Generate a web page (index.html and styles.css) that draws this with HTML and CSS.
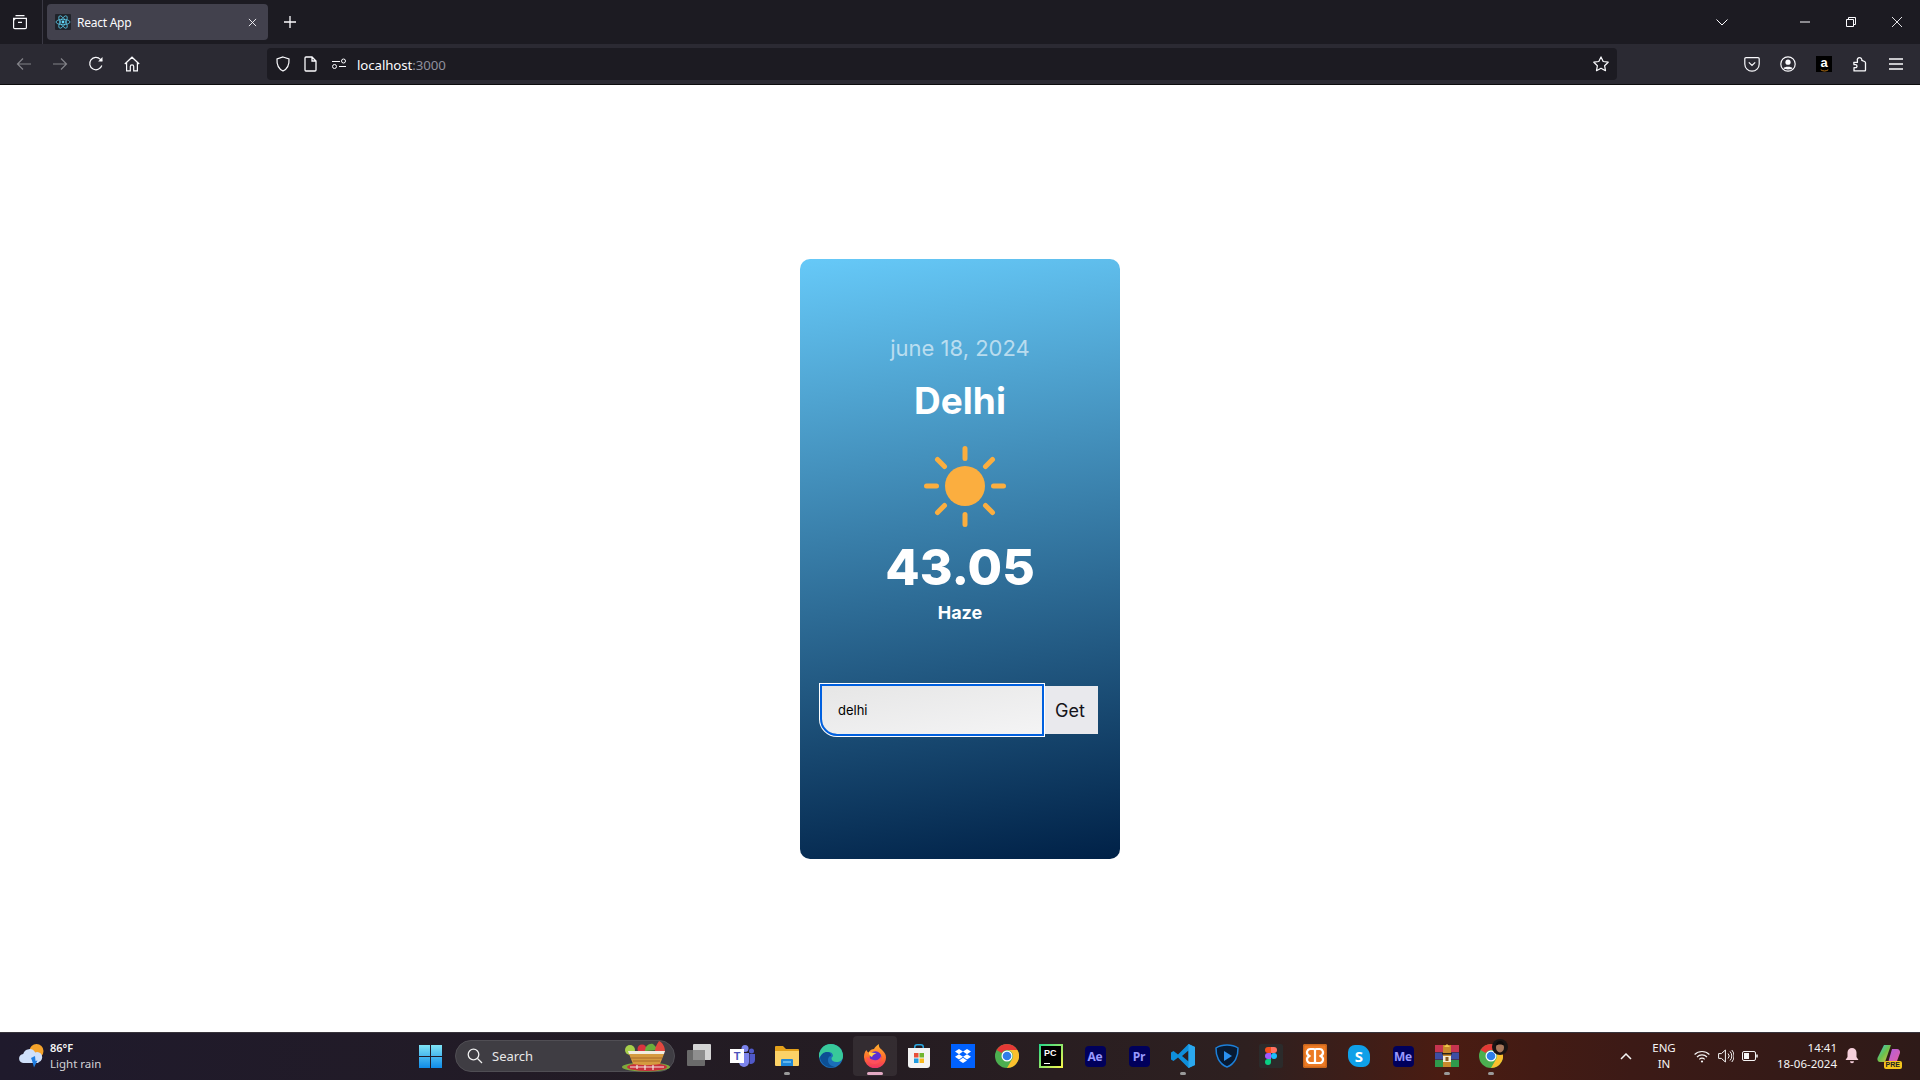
FILE: index.html
```html
<!DOCTYPE html>
<html lang="en">
<head>
<meta charset="utf-8">
<title>React App</title>
<link rel="stylesheet" href="styles.css">
</head>
<body>
<header class="chrome">
  <div class="titlebar">
    <div class="tabs-btn">
      <svg class="ico16" viewBox="0 0 16 16" fill="none" stroke="#fbfbfe" stroke-width="1.2"><path d="M3.5 1.6h9M1.6 4.4h12.8v9a1.2 1.2 0 0 1-1.2 1.2H2.8a1.2 1.2 0 0 1-1.2-1.2zM1.6 7.4a3 3 0 0 1 2-3M6 8.4h4"/></svg>
    </div>
    <div class="tab">
      <span class="favicon">
        <svg viewBox="-8 -8 16 16" width="16" height="16" fill="none" stroke="#61dafb" stroke-width=".7"><ellipse rx="7" ry="2.7"/><ellipse rx="7" ry="2.7" transform="rotate(60)"/><ellipse rx="7" ry="2.7" transform="rotate(120)"/><circle r="1.4" fill="#61dafb" stroke="none"/></svg>
      </span>
      <span class="tab-title">React App</span>
      <svg class="tab-close" viewBox="0 0 10 10" fill="none" stroke="#fbfbfe" stroke-width="1"><path d="M1 1l8 8M9 1l-8 8"/></svg>
    </div>
    <svg class="newtab" viewBox="0 0 12 12" fill="none" stroke="#fbfbfe" stroke-width="1.3"><path d="M6 0v12M0 6h12"/></svg>
    <div class="win-controls">
      <svg class="win-list" viewBox="0 0 12 7" fill="none" stroke="#fbfbfe" stroke-width="1"><path d="M.5.5L6 6l5.5-5.5"/></svg>
      <svg class="win-btn win-min" viewBox="0 0 10 10" stroke="#fbfbfe" stroke-width="1"><path d="M0 5h10"/></svg>
      <svg class="win-btn win-max" viewBox="0 0 10 10" fill="none" stroke="#fbfbfe" stroke-width="1"><path d="M.5 2.5h7v7h-7zM2.5 2.5V.5h7v7h-2"/></svg>
      <svg class="win-btn win-close" viewBox="0 0 10 10" fill="none" stroke="#fbfbfe" stroke-width=".9"><path d="M0 0l10 10M10 0L0 10"/></svg>
    </div>
  </div>
  <div class="toolbar">
    <div class="nav">
      <svg class="ico16 dim" viewBox="0 0 16 16" fill="none" stroke="#fbfbfe" stroke-width="1.2"><path d="M15 8H1.5M7 2.5L1.5 8 7 13.5"/></svg>
      <svg class="ico16 dim" viewBox="0 0 16 16" fill="none" stroke="#fbfbfe" stroke-width="1.2"><path d="M1 8h13.5M9 2.5L14.5 8 9 13.5"/></svg>
      <svg class="ico16" viewBox="0 0 16 16" fill="none" stroke="#fbfbfe" stroke-width="1.2"><path d="M13.8 9.5A6.2 6.2 0 1 1 12.4 3.3L14 4.9"/><path d="M14.5 1v4.4h-4.4" fill="#fbfbfe" stroke="none"/></svg>
      <svg class="ico16" viewBox="0 0 16 16" fill="none" stroke="#fbfbfe" stroke-width="1.2"><path d="M.8 8L8 1.2 15.2 8M2.6 6.6v8.2h3.7v-4.2a1.7 1.7 0 0 1 3.4 0v4.2h3.7V6.6"/></svg>
    </div>
    <div class="urlbar">
      <svg class="ico16 u-shield" viewBox="0 0 16 16" fill="none" stroke="#fbfbfe" stroke-width="1.2"><path d="M8 1l6 2c.4 6-1.8 10-6 12C3.800 13 1.600 9 2 3z"/></svg>
      <svg class="ico16 u-page" viewBox="0 0 16 16" fill="none" stroke="#fbfbfe" stroke-width="1.3"><path d="M3 1h6l4 4v9a1 1 0 0 1-1 1H3a1 1 0 0 1-1-1V2a1 1 0 0 1 1-1zM9 1v4h4"/></svg>
      <svg class="ico16 u-perm" viewBox="0 0 16 16" fill="none" stroke="#fbfbfe" stroke-width="1"><path d="M1 5.500h8M8 10.500h7"/><circle cx="12.500" cy="5" r="2"/><circle cx="3.500" cy="10.500" r="2"/></svg>
      <span class="url"><span class="url-host">localhost</span><span class="url-port">:3000</span></span>
      <svg class="ico16 u-star" viewBox="0 0 16 16" fill="none" stroke="#fbfbfe" stroke-width="1.200"><path d="M8 .9l2.200 4.600 5 .7-3.600 3.500.9 5L8 12.300 3.500 14.700l.9-5L.8 6.200l5-.7z" stroke-linejoin="round"/></svg>
    </div>
    <div class="tools">
      <svg class="ico16" viewBox="0 0 16 16" fill="none" stroke="#fbfbfe" stroke-width="1.200"><path d="M2 1.600h12a1.200 1.200 0 0 1 1.200 1.200V8a7.200 7.200 0 0 1-14.400 0V2.800A1.200 1.200 0 0 1 2 1.600zM4.800 6.400L8 9.400l3.200-3"/></svg>
      <svg class="ico16" viewBox="0 0 16 16" fill="none" stroke="#fbfbfe" stroke-width="1.200"><circle cx="8" cy="8" r="7.200"/><circle cx="8" cy="6.200" r="2.600" fill="#fbfbfe" stroke="none"/><path d="M3.400 12.200c1-2 8.200-2 9.200 0-1.500 1.600-7.700 1.600-9.200 0z" fill="#fbfbfe" stroke="none"/></svg>
      <span class="amazon"><span class="amazon-a">a</span><svg class="amazon-smile" viewBox="0 0 12 4" fill="none" stroke="#f39a1f" stroke-width="1"><path d="M1 1c3 2.200 7 2.200 10 0"/></svg></span>
      <svg class="ico16" viewBox="0 0 16 16" fill="none" stroke="#fbfbfe" stroke-width="1.300"><path d="M1.800 6.400h3.600V4.600a2.200 2.200 0 0 1 2.300-2.900 2.200 2.200 0 0 1 2.100 2.700l2.700 1.100c.7.300 1 .7 1 1.400v7.200a.8.800 0 0 1-.8.800H2v-3.200h1.500a1.500 1.500 0 0 0 0-3H2z" stroke-linejoin="round"/></svg>
      <svg class="ico16" viewBox="0 0 16 16" stroke="#fbfbfe" stroke-width="1.300"><path d="M1 3h14M1 8h14M1 13h14"/></svg>
    </div>
  </div>
</header>

<main class="page">
  <section class="card">
    <p class="date">june 18, 2024</p>
    <h1 class="city">Delhi</h1>
    <svg class="sun" viewBox="-42 -42 84 84" fill="none" stroke="#fbae3f" stroke-width="5" stroke-linecap="round">
      <circle r="20" fill="#fbae3f" stroke="none"/>
      <path d="M0-37.500v10M0 28.500v10M-38.500 0h10M28.500 0h10M-27.500-26.500l7 7M27.500-26.500l-7 7M-27.500 26.500l7-7M27.500 26.500l-7-7"/>
    </svg>
    <p class="temp">43.05</p>
    <p class="cond">Haze</p>
    <form class="search-form">
      <input class="city-input" type="text" value="delhi">
      <button class="get-btn" type="button">Get</button>
    </form>
  </section>
</main>

<footer class="taskbar">
  <div class="weather">
    <svg class="weather-ico" viewBox="0 0 26 26"><circle cx="18.500" cy="8" r="7" fill="#f5a32b"/><path d="M6 20a4.500 4.500 0 0 1-.8-9 6.500 6.500 0 0 1 12-1.500A5 5 0 0 1 21 19l-1 1z" fill="#cfe0fa"/><path d="M13 15l4-2 .5 5 2-.5-3.500 7-2-7z" fill="#1f7de0"/></svg>
    <div class="weather-text"><span class="w-temp">86°F</span><span class="w-cond">Light rain</span></div>
  </div>
  <svg class="start" viewBox="0 0 23 23"><defs><linearGradient id="sg" x1="0" y1="0" x2="0" y2="1"><stop offset="0" stop-color="#7fe3f5"/><stop offset="1" stop-color="#0f8be8"/></linearGradient></defs><path d="M0 0h11v11H0zM12 0h11v11H12zM0 12h11v11H0zM12 12h11v11H12z" fill="url(#sg)"/></svg>
  <div class="searchbox">
    <svg class="search-ico" viewBox="0 0 16 16" fill="none" stroke="#f0f0f0" stroke-width="1.300"><circle cx="6.500" cy="6.500" r="5.300"/><path d="M10.500 10.500l4.500 4.500"/></svg>
    <span class="search-text">Search</span>
    <svg class="food" viewBox="0 0 50 32"><ellipse cx="25" cy="27" rx="24" ry="4.500" fill="#7fa93c"/><ellipse cx="26" cy="27" rx="20" ry="4" fill="#c92f3c"/><path d="M9 27h34M16 25v4M24 25v5M32 25v5" stroke="#f4e6e0" stroke-width="1.200" fill="none"/><circle cx="9" cy="10" r="5" fill="#a6cf4a"/><circle cx="21" cy="9" r="4.500" fill="#d8343f"/><path d="M24 11c0-5 4-8 8-7l6 6z" fill="#6aae3c"/><path d="M34 12c0-6 3-9 4-11 4 2 6 6 6 11z" fill="#e2483f"/><path d="M7 11h37l-1 3H8z" fill="#f1ece0"/><path d="M8 14h35l-4 10c-8 1.500-19 1.500-27 0z" fill="#d59a3f"/><path d="M10 18h31M12 21h27" stroke="#a8692a" stroke-width="1" fill="none"/></svg>
  </div>
  <div class="apps">
    <div class="app"><svg class="app-ico" viewBox="0 0 24 24"><rect x="0" y="6" width="18" height="16" rx="1" fill="#6a6a6a"/><rect x="6" y="0" width="18" height="16" rx="1" fill="#e4e4e4" opacity=".92"/><rect x="6" y="6" width="12" height="10" fill="#8e8e8e"/></svg></div>
    <div class="app"><svg class="app-ico" viewBox="0 0 24 24"><circle cx="14" cy="4.500" r="3.500" fill="#7b83eb"/><circle cx="20.500" cy="7" r="2.500" fill="#5059c9"/><path d="M8 9h10v9a5 5 0 0 1-10 0z" fill="#7b83eb"/><path d="M18.500 10H24v6a4 4 0 0 1-5.500 3.700z" fill="#5059c9"/></svg><span class="teams-t">T</span></div>
    <div class="app has-dot"><svg class="app-ico" viewBox="0 0 24 24"><path d="M0 3a1 1 0 0 1 1-1h7l3 3h12a1 1 0 0 1 1 1v3H0z" fill="#e4a11b"/><path d="M0 7h24v14a1 1 0 0 1-1 1H1a1 1 0 0 1-1-1z" fill="#fcd267"/><path d="M7 15h10a1 1 0 0 1 1 1v6H6v-6a1 1 0 0 1 1-1z" fill="#1e88d9"/><rect x="8" y="17" width="8" height="2" fill="#61b7ef"/></svg></div>
    <div class="app"><svg class="app-ico" viewBox="0 0 24 24"><circle cx="12" cy="12" r="12" fill="#1b6fb8"/><path d="M12 0a12 12 0 0 1 12 12c0 4-3 6-6.500 6-3 0-5-1.500-5-3.500 0-1 .7-1.500 1.200-2 .6-.6.300-4.500-4.200-4.500-4 0-7.500 3-9.500 6A12 12 0 0 1 12 0z" fill="#38c99a"/><path d="M1 14c1-4 4-6 7-6 3 0 4 2 4 4-2 0-3 2-3 4 0 4 3 6 7 7a12 12 0 0 1-15-9z" fill="#0c4f94"/></svg></div>
    <div class="app active"><svg class="app-ico" viewBox="0 0 24 24"><defs><linearGradient id="ff" x1="0" y1="0" x2="0" y2="1"><stop offset="0" stop-color="#ffb02e"/><stop offset=".6" stop-color="#ff6a2e"/><stop offset="1" stop-color="#f0306a"/></linearGradient></defs><path d="M1 13c0-3 .8-5.500 2.500-7 .3 1.200 1 2 2 2.500C7 6 9 5 11 5c1-2.500 3-3.500 5-5-.4 2.500.3 3.500 2 5 3 2.500 5 5 5 8.500A11 11 0 0 1 1 13z" fill="url(#ff)"/><circle cx="12.500" cy="13" r="5.800" fill="#5b2ed0"/><path d="M3 13c2 5 6 8 11 6.500 3-1 5-4 4-7.500-1 3-4 5-7 4-3-.7-5-2-8-3z" fill="#ff4f5e"/><path d="M6 8c2.500 1 5 .5 7.500 1.500C11 10 9.500 11 9 13c-2-1-3.500-2.500-3-5z" fill="#ffd24a"/></svg></div>
    <div class="app"><svg class="app-ico" viewBox="0 0 24 24"><path d="M7 5V3a3 3 0 0 1 3-3h4a3 3 0 0 1 3 3v2h-1.500V3A1.500 1.500 0 0 0 14 1.500h-4A1.500 1.500 0 0 0 8.500 3v2z" fill="#2aa7e0"/><path d="M1 4h22v17a3 3 0 0 1-3 3H4a3 3 0 0 1-3-3z" fill="#f3f3f3"/><rect x="7" y="9" width="4.500" height="4.500" fill="#e8503a"/><rect x="12.500" y="9" width="4.500" height="4.500" fill="#70b52e"/><rect x="7" y="14.500" width="4.500" height="4.500" fill="#1f9be0"/><rect x="12.500" y="14.500" width="4.500" height="4.500" fill="#f7b81e"/></svg></div>
    <div class="app"><svg class="app-ico" viewBox="0 0 24 24"><rect width="24" height="24" fill="#0061fe"/><path d="M8 5l4 2.600L8 10.200 4 7.600zM16 5l4 2.600-4 2.600-4-2.600zM4 12.800l4-2.600 4 2.600-4 2.600zM12 12.800l4-2.600 4 2.600-4 2.600zM8 16.400l4-2.600 4 2.600-4 2.600z" fill="#fff"/></svg></div>
    <div class="app"><svg class="app-ico" viewBox="-12 -12 24 24"><circle r="12" fill="#4caf50"/><path d="M0-12A12 12 0 0 1 10.400-6H0A6 6 0 0 0-5.200-3L-10.400-6A12 12 0 0 1 0-12z" fill="#e53935"/><path d="M10.400-6A12 12 0 0 1 0 12L5.200 3A6 6 0 0 0 0-6z" fill="#fbc02d"/><circle r="5.500" fill="#fff"/><circle r="4.300" fill="#2f7ee8"/></svg></div>
    <div class="app"><span class="pc-ico"><span class="pc-inner">PC<i class="pc-bar"></i></span></span></div>
    <div class="app"><span class="adobe adobe-ae">Ae</span></div>
    <div class="app"><span class="adobe adobe-pr">Pr</span></div>
    <div class="app has-dot"><svg class="app-ico" viewBox="0 0 24 24"><path d="M17.500 0L24 3v18l-6.500 3L7 13.500 2.500 17 0 15.500V8.500L2.500 7 7 10.500zM17.500 6.500L11 12l6.500 5.500z" fill="#0f8fdb"/><path d="M17.500 0L24 3v18l-6.500 3z" fill="#2ba8ee"/></svg></div>
    <div class="app"><svg class="app-ico" viewBox="0 0 24 24"><path d="M12 1c4 0 8 1 11 3 .3 8-3 16-11 19C4 20 .7 12 1 4c3-2 7-3 11-3z" fill="#071a33" stroke="#1c7fd8" stroke-width="1.500"/><path d="M9 7l8 5-8 5z" fill="#2a90f0"/></svg></div>
    <div class="app"><span class="figma-bg"><svg viewBox="0 0 12 18" width="12" height="18"><path d="M6 0H3a3 3 0 0 0 0 6h3z" fill="#f24e1e"/><path d="M6 0h3a3 3 0 0 1 0 6H6z" fill="#ff7262"/><path d="M6 6H3a3 3 0 0 0 0 6h3z" fill="#a259ff"/><circle cx="9" cy="9" r="3" fill="#1abcfe"/><path d="M3 12h3v3a3 3 0 1 1-3-3z" fill="#0acf83"/></svg></span></div>
    <div class="app"><svg class="app-ico" viewBox="0 0 24 24"><rect width="24" height="24" rx="2" fill="#ec7a24"/><rect x=".7" y=".7" width="22.600" height="22.600" rx="1.500" fill="none" stroke="#c9661c" stroke-width="1.400"/><path d="M7.500 5h3c1 0 1.500.8 1.500 1.800C12 5.800 12.500 5 13.500 5h3a3.500 3.500 0 0 1 1.800 6.500l-1 .5 1 .5A3.500 3.500 0 0 1 16.500 19h-3c-1 0-1.500-.8-1.500-1.800 0 1-.5 1.800-1.500 1.800h-3a3.500 3.500 0 0 1-1.800-6.500l1-.5-1-.5A3.500 3.500 0 0 1 7.500 5zM12 7v10" fill="none" stroke="#fff" stroke-width="2.200" stroke-linejoin="round"/></svg></div>
    <div class="app"><span class="skype">S</span></div>
    <div class="app"><span class="adobe adobe-me">Me</span></div>
    <div class="app has-dot"><svg class="app-ico" viewBox="0 0 24 24"><rect y="1" width="24" height="7" fill="#c7344f"/><rect y="8.500" width="24" height="7" fill="#3e4ea3"/><rect y="16" width="24" height="7" fill="#2f9a4c"/><rect x="8" y="1" width="8" height="22" fill="#c98a2c"/><path d="M12 0l3 3H9z" fill="#efc44a"/><rect x="7" y="9" width="10" height="1.500" fill="#2a2218"/><rect x="8" y="12" width="8" height="6" fill="#f3ead0"/><rect x="10.500" y="13" width="3" height="4" fill="#8a5a20"/></svg></div>
    <div class="app has-dot"><svg class="app-ico" viewBox="-12 -12 24 24"><circle r="12" fill="#4caf50"/><path d="M0-12A12 12 0 0 1 10.400-6H0A6 6 0 0 0-5.200-3L-10.400-6A12 12 0 0 1 0-12z" fill="#e53935"/><path d="M10.400-6A12 12 0 0 1 0 12L5.200 3A6 6 0 0 0 0-6z" fill="#fbc02d"/><circle r="5.500" fill="#fff"/><circle r="4.300" fill="#2f7ee8"/></svg><svg class="chrome-avatar" viewBox="0 0 16 16"><circle cx="8" cy="8" r="8" fill="#1a1414"/><ellipse cx="8" cy="8.500" rx="4" ry="5" fill="#a8785c"/><path d="M3.500 7c0-3 2-5 4.500-5s4.500 2 4.500 5c-2-2-7-2-9 0z" fill="#0e0a0a"/></svg></div>
  </div>
  <div class="tray">
    <svg class="tray-chev" viewBox="0 0 12 7" fill="none" stroke="#f5f5f5" stroke-width="1.500"><path d="M1 6l5-5 5 5"/></svg>
    <div class="lang"><span>ENG</span><span>IN</span></div>
    <svg class="tray-wifi" viewBox="0 0 16 13" fill="none" stroke="#f5f5f5" stroke-width="1.100"><path d="M.6 4.500a10.500 10.500 0 0 1 14.800 0M3 7a7 7 0 0 1 10 0M5.300 9.300a3.700 3.700 0 0 1 5.400 0"/><circle cx="8" cy="11.500" r="1.100" fill="#f5f5f5" stroke="none"/></svg>
    <svg class="tray-vol" viewBox="0 0 16 14" fill="none" stroke="#f5f5f5" stroke-width="1"><path d="M.6 4.600h2.800L7.400 1v12L3.400 9.400H.6zM10 4.500a3.500 3.500 0 0 1 0 5M12 2.500a6.500 6.500 0 0 1 0 9M13.800 1a9 9 0 0 1 0 12"/></svg>
    <svg class="tray-bat" viewBox="0 0 16 10" fill="none" stroke="#f5f5f5" stroke-width="1"><rect x=".5" y=".5" width="13" height="9" rx="1.500"/><rect x="2" y="2" width="5" height="6" fill="#f5f5f5" stroke="none"/><path d="M15 3.500v3" stroke-width="1.500"/></svg>
    <div class="clock"><span>14:41</span><span>18-06-2024</span></div>
    <svg class="tray-bell" viewBox="0 0 14 16" fill="#f6d0dc"><path d="M7 0a4.500 4.500 0 0 1 4.500 4.500V9l2 3H.5l2-3V4.500A4.500 4.500 0 0 1 7 0z"/><path d="M5 13.200h4a2 2 0 0 1-4 0z"/></svg>
    <div class="copilot">
      <svg class="copilot-ico" viewBox="0 0 24 20"><defs><linearGradient id="cg" x1="0" y1="0" x2="1" y2="1"><stop offset="0" stop-color="#35c7e8"/><stop offset=".5" stop-color="#6cc04a"/><stop offset="1" stop-color="#f2c04b"/></linearGradient><linearGradient id="cp" x1="0" y1="0" x2="1" y2="1"><stop offset="0" stop-color="#b05fe0"/><stop offset="1" stop-color="#e65fa0"/></linearGradient></defs><path d="M7 1h7l-6 17H3c-2 0-3-2-2.500-4z" fill="url(#cg)"/><path d="M15 5h5c2 0 3.500 2 3 4l-3 8c-.5 1.500-2 2-3 2h-6z" fill="url(#cp)"/></svg>
      <span class="pre">PRE</span>
    </div>
  </div>
</footer>
</body>
</html>
```
FILE: styles.css
```css
* { box-sizing: border-box; }
html, body { margin: 0; height: 100%; }
body { display: flex; flex-direction: column; height: 1080px; overflow: hidden; background: #fff; font-family: "Noto Sans", "Open Sans", sans-serif; }
svg { display: block; flex: none; }
.ico16 { width: 16px; height: 16px; }
.dim { opacity: .42; }

.chrome { flex: none; height: 85px; display: flex; flex-direction: column; border-bottom: 1px solid #0c0c0d; }
.titlebar { height: 44px; background: #1c1b22; display: flex; align-items: center; }
.tabs-btn { width: 43px; height: 44px; flex: none; display: flex; align-items: center; justify-content: center; border-right: 1px solid #3a3944; padding-right: 2px; }
.tab { width: 221px; height: 36px; margin-left: 4px; background: #42414d; border-radius: 4px; display: flex; align-items: center; padding: 0 8px; color: #fbfbfe; }
.favicon { width: 16px; height: 16px; background: #20232a; border-radius: 1px; flex: none; }
.tab-title { margin-left: 6px; font-size: 12px; flex: 1; font-family: "Noto Sans", sans-serif; letter-spacing: -.25px; }
.tab-close { width: 9px; height: 9px; margin-right: 3px; }
.newtab { width: 12px; height: 12px; margin-left: 16px; }
.win-controls { margin-left: auto; display: flex; align-items: center; }
.win-list { width: 12px; height: 7px; margin-right: 72px; }
.win-btn { width: 10px; height: 10px; margin-right: 36px; }
.win-close { margin-right: 18px; }

.toolbar { height: 40px; background: #2b2a33; display: flex; align-items: center; }
.nav { display: flex; align-items: center; width: 267px; padding-left: 16px; gap: 20px; }
.urlbar { width: 1350px; height: 32px; background: #1c1b22; border-radius: 4px; display: flex; align-items: center; padding-left: 8px; flex: none; }
.u-page { margin-left: 12px; }
.u-perm { margin-left: 12px; }
.url { margin-left: 10px; padding-top: 1px; font-size: 13.300px; flex: 1; letter-spacing: -.1px; }
.url-host { color: #fbfbfe; }
.url-port { color: #8f8f9d; }
.u-star { margin-right: 8px; }
.tools { display: flex; align-items: center; gap: 20px; padding-left: 127px; }
.tools > * { width: 16px; height: 16px; flex: none; }
.amazon { background: #000; display: flex; flex-direction: column; align-items: center; position: relative; }
.amazon-a { color: #fff; font: 700 13px/13px "Liberation Sans", sans-serif; }
.amazon-smile { width: 11px; height: 3px; }

.page { flex: 1; display: flex; align-items: center; justify-content: center; background: #fff; }
.card { width: 320px; height: 600px; border-radius: 10px; background: linear-gradient(172deg, #66c9f8 0%, #002147 100%); display: flex; flex-direction: column; align-items: center; padding-top: 74px; font-family: Inter, sans-serif; color: #fff; }
.date { margin: 0; font-size: 22px; line-height: 30px; color: rgba(255, 255, 255, .6); }
.city { margin: 16px 0 0; font-size: 37px; line-height: 44px; font-weight: 700; }
.sun { width: 84px; height: 84px; margin: 21px 0 0 10px; }
.temp { margin: 8px 0 0; font-size: 50px; line-height: 63px; font-weight: 800; }
.cond { margin: 3px 0 0; font-size: 18px; line-height: 22px; font-weight: 700; }
.search-form { margin-top: 62px; display: flex; width: 276px; height: 48px; }
.city-input { width: 220px; height: 48px; border: 0; padding: 1px 16px 0; font: 400 13px Inter, sans-serif; color: #000; background: linear-gradient(170deg, #e6e6e6, #f4f4f5); border-radius: 0 0 0 15px; outline: 2px solid #0060df; box-shadow: 0 0 0 3px #fff; position: relative; z-index: 1; }
.get-btn { width: 56px; height: 48px; border: 0; padding: 1px 0 0; font: 400 18px Inter, sans-serif; color: #15141a; background: #e9e9ed; }

.taskbar { flex: none; height: 48px; background: linear-gradient(90deg, #1f1a2c 0%, #241c22 45%, #2e2020 65%, #4a1c12 75%, #3c1a16 85%, #2e1a18 100%); box-shadow: inset 0 1px 0 #38343c; display: flex; align-items: center; color: #f5f5f5; position: relative; }
.weather { width: 419px; padding-left: 18px; display: flex; align-items: center; flex: none; }
.weather-ico { width: 26px; height: 26px; }
.weather-text { display: flex; flex-direction: column; margin-left: 6px; font-size: 11.500px; line-height: 16px; }
.w-temp { font-weight: 600; font-size: 11px; }
.w-cond { color: #d4d2d6; }
.start { width: 23px; height: 23px; }
.searchbox { width: 220px; height: 32px; margin-left: 13px; border-radius: 16px; background: #3f3d43; border: 1px solid #504e54; display: flex; align-items: center; padding-left: 11px; flex: none; }
.search-ico { width: 16px; height: 16px; }
.search-text { margin-left: 9px; font-size: 13px; color: #e8e8e8; flex: 1; }
.food { width: 50px; height: 32px; margin-right: 3px; }
.apps { display: flex; align-items: center; margin-left: 2px; height: 48px; }
.app { width: 44px; height: 40px; display: flex; align-items: center; justify-content: center; position: relative; flex: none; }
.app-ico { width: 24px; height: 24px; }
.has-dot::after { content: ""; position: absolute; left: 19px; bottom: 1px; width: 6px; height: 3px; border-radius: 2px; background: #9a9a9a; }
.active { background: rgba(255, 255, 255, .07); border-radius: 4px; }
.active::after { content: ""; position: absolute; left: 14px; bottom: 1px; width: 16px; height: 3px; border-radius: 2px; background: #e3aac4; }
.teams-t { position: absolute; left: 9px; top: 13px; width: 14px; height: 14px; background: #fff; color: #4b53bc; font: 700 11px/14px "Liberation Sans", sans-serif; text-align: center; }
.pc-ico { width: 24px; height: 24px; background: linear-gradient(135deg, #21d789, #fcf84a); padding: 2px; display: block; }
.pc-inner { display: block; width: 20px; height: 20px; background: #000; color: #fff; font: 700 9px/12px "Liberation Sans", sans-serif; padding: 1px 0 0 3px; position: relative; }
.pc-bar { position: absolute; left: 3px; bottom: 2px; width: 6px; height: 1.500px; background: #fff; }
.adobe { width: 21px; height: 21px; border-radius: 4px; background: #00005b; font: 700 12px/21px "Open Sans", sans-serif; text-align: center; letter-spacing: -.3px; }
.adobe-ae { color: #9999ff; background: #00005b; }
.adobe-pr { color: #9999ff; background: #00005b; }
.adobe-me { color: #9999ff; background: #00005b; }
.figma-bg { width: 24px; height: 24px; background: #2b2b2b; border-radius: 2px; display: flex; align-items: center; justify-content: center; }
.skype { width: 22px; height: 22px; border-radius: 7px 11px 7px 11px; background: #0fa0e8; color: #fff; font: 700 15px/22px "Open Sans", sans-serif; text-align: center; }
.chrome-avatar { position: absolute; right: 5px; top: 3px; width: 16px; height: 16px; }

.tray { flex: none; display: flex; align-items: center; margin-left: 0; height: 48px; position: relative; width: 407px; }
.tray-chev { width: 12px; height: 7px; margin-left: 107px; }
.lang { width: 40px; margin-left: 12px; display: flex; flex-direction: column; align-items: center; font-size: 11.500px; line-height: 16px; }
.tray-wifi { width: 16px; height: 13px; margin-left: 10px; }
.tray-vol { width: 16px; height: 14px; margin-left: 8px; }
.tray-bat { width: 16px; height: 10px; margin-left: 8px; }
.clock { width: 79px; display: flex; flex-direction: column; align-items: flex-end; font-size: 11.500px; line-height: 16px; }
.tray-bell { width: 14px; height: 16px; margin-left: 8px; }
.copilot { position: relative; width: 24px; height: 24px; margin-left: 18px; }
.copilot-ico { width: 24px; height: 20px; }
.pre { position: absolute; right: -1px; bottom: -1px; background: #f4c41c; color: #222; font: 700 7px/8px "Liberation Sans", sans-serif; padding: 0 2px; border-radius: 2px; }
```
